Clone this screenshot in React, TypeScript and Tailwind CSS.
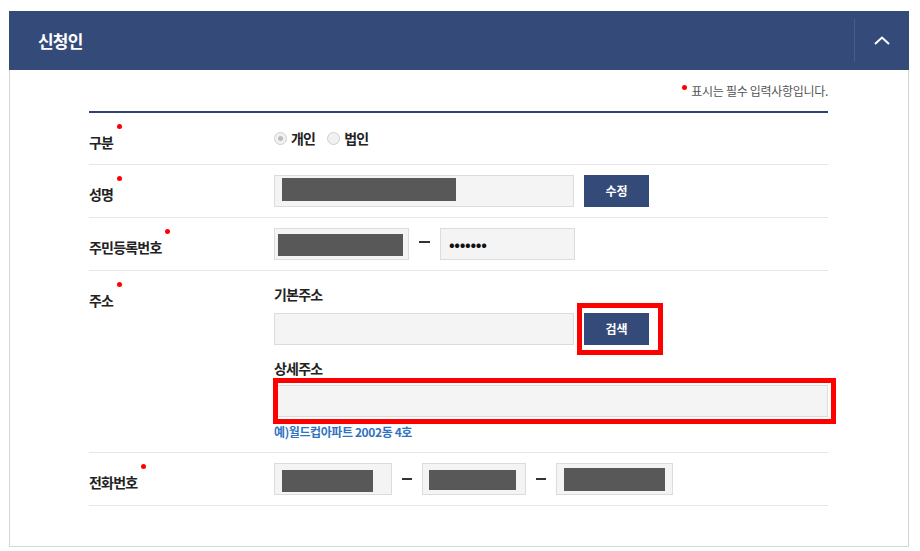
import React from 'react';

const font = { fontFamily: '"Noto Sans CJK KR", "Noto Sans", sans-serif' };

function Dot() {
  return <span className="absolute -right-[9px] -top-[8px] h-[5px] w-[5px] rounded-full bg-[#ff0000]" />;
}

function Label({ text }: { text: string }) {
  return (
    <div className="w-[185px] shrink-0 pt-[16px]">
      <span className="relative text-[14px] font-bold leading-[20px] tracking-[-0.8px] text-[#222]">
        {text}
        <Dot />
      </span>
    </div>
  );
}

function Redacted({ className }: { className: string }) {
  return <div className={'bg-[#585858] ' + className} />;
}

function Dash() {
  return <div className="h-[2px] w-[10px] bg-[#333]" />;
}

function Row({ label, children }: { label: string; children: React.ReactNode }) {
  return (
    <div className="flex border-b border-[#e6e6e6]">
      <Label text={label} />
      <div className="flex-1">{children}</div>
    </div>
  );
}

function Radio({ checked, label }: { checked?: boolean; label: string }) {
  return (
    <label className="flex items-center gap-[4px]">
      <span className="flex h-[13px] w-[13px] items-center justify-center rounded-full border border-[#cfcfcf] bg-[#f1f1f1]">
        {checked && <span className="h-[5px] w-[5px] rounded-full bg-[#bdbdbd]" />}
      </span>
      <span className="text-[14px] font-bold tracking-[-0.8px] text-[#222]">{label}</span>
    </label>
  );
}

export default function App() {
  return (
    <div className="min-h-[551px] w-[920px] bg-white pt-[11px] pl-[9px]" style={font}>
      <div className="w-[900px]">
        <div className="flex h-[59px] items-center justify-between bg-[#344b7a]">
          <h2 className="pl-[29px] text-[17px] font-bold tracking-[-0.8px] text-white">신청인</h2>
          <div className="flex h-[43px] w-[55px] items-center justify-center border-l border-[#4a5d86]">
            <svg width="16" height="9" viewBox="0 0 16 9" fill="none">
              <polyline points="1,8 8,1.5 15,8" stroke="white" strokeWidth="2" />
            </svg>
          </div>
        </div>

        <div className="border-x border-b border-[#d6d6d6] pl-[79px] pr-[80px] pb-[40px]">
          <p className="pt-[13px] text-right text-[12px] leading-[16px] tracking-[-0.3px] text-[#555]">
            <span className="relative -top-[6px] mr-[4px] inline-block h-[5px] w-[5px] rounded-full bg-[#ff0000]" />
            표시는 필수 입력사항입니다.
          </p>
          <div className="mt-[12px] h-[2px] bg-[#2f4470]" />

          <div className="flex h-[52px] border-b border-[#e6e6e6]">
            <Label text="구분" />
            <div className="flex items-center gap-[12px]">
              <Radio checked label="개인" />
              <Radio label="법인" />
            </div>
          </div>

          <Row label="성명">
            <div className="flex py-[10px]">
              <div className="h-[32px] w-[300px] border border-[#dcdcdc] bg-[#f4f4f4] pl-[7px] pt-[2px]">
                <Redacted className="h-[23px] w-[174px]" />
              </div>
              <button className="ml-[10px] h-[32px] w-[65px] bg-[#344b7a] text-[12px] font-bold text-white">수정</button>
            </div>
          </Row>

          <Row label="주민등록번호">
            <div className="flex items-center py-[10px]">
              <div className="h-[32px] w-[135px] border border-[#dcdcdc] bg-[#f4f4f4] pl-[3px] pt-[5px]">
                <Redacted className="h-[22px] w-[125px]" />
              </div>
              <div className="mx-[10px] -mt-[4px] h-[2px] w-[11px] bg-[#333]" />
              <div className="flex h-[32px] w-[135px] items-center border border-[#dcdcdc] bg-[#f4f4f4] pl-[8px] text-[15px] font-bold tracking-[-0.3px] text-[#111]">
                •••••••
              </div>
            </div>
          </Row>

          <Row label="주소">
            <div className="pt-[13px] pb-[12px]">
              <p className="text-[14px] font-bold leading-[20px] tracking-[-0.8px] text-[#222]">기본주소</p>
              <div className="mt-[9px] flex">
                <div className="h-[32px] w-[300px] border border-[#dcdcdc] bg-[#f4f4f4]" />
                <div className="relative ml-[10px]">
                  <button className="h-[32px] w-[65px] bg-[#344b7a] text-[12px] font-bold text-white">검색</button>
                  <div className="pointer-events-none absolute -left-[7px] -top-[10px] h-[52px] w-[86px] border-[5px] border-[#ff0000]" />
                </div>
              </div>
              <p className="mt-[13px] text-[14px] font-bold leading-[20px] tracking-[-0.8px] text-[#222]">상세주소</p>
              <div className="relative mt-[7px] h-[32px] w-[554px]">
                <div className="h-full w-full border border-[#dcdcdc] bg-[#f4f4f4]" />
                <div className="pointer-events-none absolute -left-[1px] -top-[7px] h-[46px] w-[563px] border-[5px] border-[#ff0000]" />
              </div>
              <p className="mt-[7px] text-[12px] font-bold leading-[16px] tracking-[-0.4px] text-[#2f72c2]">
                예)월드컵아파트 2002동 4호
              </p>
            </div>
          </Row>

          <Row label="전화번호">
            <div className="flex items-center py-[10px]">
              <div className="h-[32px] w-[118px] border border-[#dcdcdc] bg-[#f4f4f4] pl-[7px] pt-[6px]">
                <Redacted className="h-[22px] w-[91px]" />
              </div>
              <div className="mx-[10px]"><Dash /></div>
              <div className="h-[32px] w-[104px] border border-[#dcdcdc] bg-[#f4f4f4] pl-[6px] pt-[6px]">
                <Redacted className="h-[20px] w-[87px]" />
              </div>
              <div className="mx-[10px]"><Dash /></div>
              <div className="h-[32px] w-[117px] border border-[#dcdcdc] bg-[#f4f4f4] pl-[7px] pt-[4px]">
                <Redacted className="h-[23px] w-[101px]" />
              </div>
            </div>
          </Row>
        </div>
      </div>
    </div>
  );
}
